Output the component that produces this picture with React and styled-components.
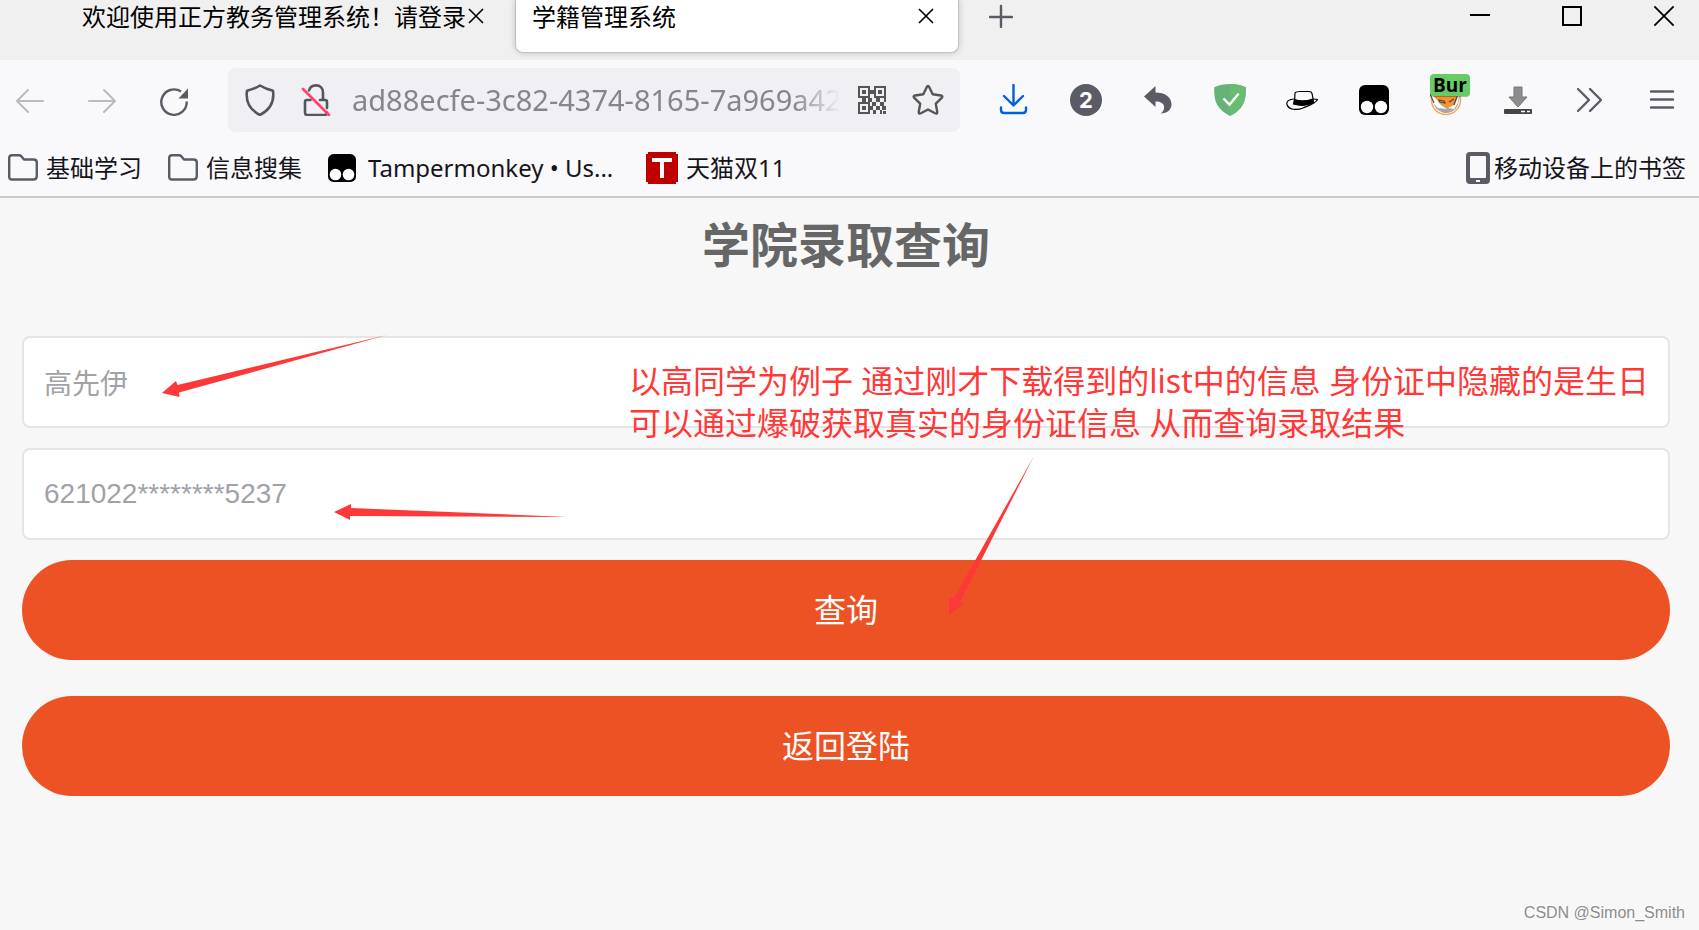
import React, { memo } from "react";
import styled, { createGlobalStyle } from "styled-components";

const GlobalStyle = createGlobalStyle`
  * {
    box-sizing: border-box;
  }
  body {
    margin: 0;
    background-color: #f7f7f7;
    font-family: "Noto Sans", "Noto Sans CJK SC", sans-serif;
  }
  button, input {
    margin: 0;
    padding: 0;
    border: 0;
    outline: 0;
    background: none;
    font-family: inherit;
  }
  svg {
    display: block;
    flex: none;
  }
`;

const Window = styled.div`
  display: flex;
  flex-direction: column;
  min-height: 100vh;
`;

const TabStrip = styled.header`
  display: flex;
  align-items: flex-start;
  height: 60px;
  background-color: #f0f0f0;
`;

const Tab = styled.div`
  display: flex;
  align-items: flex-start;
  width: 444px;
  height: 53px;
  padding: 0 24px 0 16px;
  justify-content: space-between;
  background-color: #ffffff;
  border: 1px solid #c0c0c8;
  border-top: 0;
  border-radius: 0 0 8px 8px;
  box-shadow: 0 0 6px rgba(0, 0, 0, 0.2);
`;

const BackgroundTab = styled.div`
  display: flex;
  align-items: flex-start;
  width: 515px;
  gap: 2px;
  padding-left: 82px;
`;

const TabTitle = styled.button`
  flex: none;
  height: 34px;
  font-size: 24px;
  line-height: 34px;
  color: #000000;
  white-space: nowrap;
`;

const TabClose = styled.button`
  display: flex;
  align-items: center;
  height: 32px;
`;

const NewTab = styled(TabClose)`
  margin-left: 30px;
`;

const WindowControls = styled.div`
  display: flex;
  gap: 70px;
  height: 32px;
  margin-left: auto;
  padding-right: 24px;
`;

const Toolbar = styled.nav`
  display: flex;
  align-items: center;
  gap: 26px;
  height: 80px;
  padding: 0 9px 0 2px;
  background-color: #f9f9fb;
`;

const ToolGroup = styled.div`
  display: flex;
  gap: 16px;
`;

const ToolButton = styled.button`
  display: flex;
  position: relative;
  align-items: center;
  justify-content: center;
  width: 56px;
  height: 56px;
`;

const UrlBar = styled.div`
  display: flex;
  flex: 1;
  min-width: 0;
  align-items: center;
  height: 64px;
  padding: 0 16px;
  background-color: #f0f0f4;
  border-radius: 8px;
`;

const UrlIcons = styled.div`
  display: flex;
  gap: 24px;
`;

const UrlButton = styled.button`
  width: 32px;
  height: 32px;
`;

const UrlInput = styled.input`
  flex: 1;
  min-width: 0;
  margin: 0 16px 0 20px;
  font-size: 29px;
  line-height: 44px;
  color: #85858a;
  mask-image: linear-gradient(to left, transparent, #000000 48px);
`;

const Badge = styled.span`
  position: absolute;
  top: 2px;
  left: 12px;
  width: 40px;
  height: 22px;
  border-radius: 4px;
  background-color: #66cc66;
  box-shadow: 0 1px 1px rgba(0, 0, 0, 0.3);
  font-family: "Open Sans", sans-serif;
  font-size: 19px;
  font-weight: 700;
  line-height: 22px;
  text-align: center;
  color: #000000;
`;

const Count = styled.span`
  width: 32px;
  height: 32px;
  border-radius: 50%;
  background-color: #5b5b66;
  font-family: Inter, sans-serif;
  font-size: 22px;
  font-weight: 700;
  line-height: 32px;
  text-align: center;
  color: #ffffff;
`;

const BookmarkBar = styled.div`
  display: flex;
  align-items: center;
  gap: 26px;
  height: 58px;
  padding: 0 13px 0 8px;
  background-color: #f9f9fb;
  border-bottom: 2px solid #cccccc;
`;

const Bookmark = styled.a`
  display: flex;
  align-items: center;
  gap: ${(props) => props.$gap || 8}px;
  min-width: ${(props) => props.$width || 134}px;
  font-size: 24px;
  line-height: 32px;
  color: #15141a;
  text-decoration: none;
  white-space: nowrap;
  &:last-child {
    margin-left: auto;
  }
`;

const Page = styled.main`
  position: relative;
  display: flex;
  flex: 1;
  flex-direction: column;
  padding: 0 29px 0 22px;
  background-color: #f7f7f7;
`;

const Title = styled.h1`
  margin: 0 0 44px;
  padding: 15px 0;
  font-size: 48px;
  font-weight: 700;
  line-height: 64px;
  text-align: center;
  color: #666666;
`;

const Form = styled.form`
  display: flex;
  flex-direction: column;
  gap: 20px;
`;

const Field = styled.input`
  width: 100%;
  height: 92px;
  padding: 0 20px;
  border: 2px solid #e5e5e5;
  border-radius: 8px;
  background-color: #ffffff;
  font-family: "Liberation Sans", "Noto Sans CJK SC", sans-serif;
  font-size: 28px;
  color: #a0a2a8;
`;

const Buttons = styled.div`
  display: flex;
  flex-direction: column;
  gap: 36px;
`;

const SubmitButton = styled.button`
  width: 100%;
  height: 100px;
  padding-bottom: 4px;
  border-radius: 50px;
  background-color: #ed5224;
  font-size: 32px;
  color: #ffffff;
`;

/* notes drawn over the form */
const Note = styled.p`
  position: absolute;
  top: 162px;
  left: 629px;
  margin: 0;
  font-size: 32px;
  line-height: 42px;
  color: #ff3838;
  white-space: nowrap;
`;

const Arrow = styled.svg`
  position: absolute;
  top: ${(props) => props.$top}px;
  left: ${(props) => props.$left}px;
  fill: #fc3838;
  pointer-events: none;
`;

const Watermark = styled.footer`
  margin: auto -15px 7px 0;
  font-family: "Liberation Sans", sans-serif;
  font-size: 16px;
  line-height: 20px;
  text-align: right;
  color: #8c8c8c;
  text-shadow: -1px -1px 0 #ffffff;
`;

const CrossIcon = ({ size = 16, width = 2 }) => (
  <svg width={size} height={size} viewBox="0 0 16 16" stroke="#000" strokeWidth={width} fill="none">
    <path d="M1 1l14 14M15 1L1 15" />
  </svg>
);

const ArrowIcon = ({ flip }) => (
  <svg width="32" height="32" fill="none" stroke="#bbbbbe" strokeWidth="2" strokeLinecap="round" strokeLinejoin="round">
    <path d={flip ? "M3 17h26M18 6l11 11-11 11" : "M29 17H3M14 6L3 17l11 11"} />
  </svg>
);

const ReloadIcon = () => (
  <svg width="32" height="32" fill="none" stroke="#5b5b66" strokeWidth="2.4">
    <path d="M28.7 17.5A12.7 12.7 0 1 1 23 7.5" />
    <path d="M30 4.5v10h-9.5z" fill="#5b5b66" stroke="none" />
  </svg>
);

const ShieldIcon = () => (
  <svg width="32" height="32" fill="none" stroke="#55555c" strokeWidth="2.6" strokeLinejoin="round">
    <path d="M16 1.5c4 2.5 8 4 13 5.3 1.500 10.500-3 19-13 24.200C6 26 1.500 17.300 3 6.800 8 5.500 12 4 16 1.500z" />
  </svg>
);

const LockIcon = () => (
  <svg width="32" height="32" fill="none" stroke="#55555c" strokeWidth="2.6" strokeLinecap="round">
    <path d="M9 6.500C10 3 12.500 1.400 16 1.400c4.300 0 7 3 7 7V15" />
    <path d="M10.500 16H7q-2 0-2 2v10.500q0 2.500 2.500 2.500h17q2.500 0 2.500-2.500M20 16h5q2 0 2 2v6" />
    <path d="M3 5l26 26" stroke="#ff4070" />
  </svg>
);

const QrIcon = () => (
  <svg width="32" height="32" fill="#555558">
    <path fillRule="evenodd" d="M2 2h12v12H2zm2 2v8h8V4zM18 2h12v12H18zm2 2v8h8V4zM2 18h12v12H2zm2 2v8h8v-8z" />
    <path d="M6 6h4v4H6zM22 6h4v4h-4zM6 22h4v4H6zM14 6h4v4h-4zM6 14h4v4H6zM12 14h4v4h-4zM16 18h4v4h-4zM20 14h4v4h-4zM24 18h4v4h-4zM28 14h2v4h-2zM20 22h4v4h-4zM14 22h3v4h-3zM17 26h3v4h-3zM24 26h2v4h-2zM26 22h4v4h-4zM27 27h3v3h-3z" />
  </svg>
);

const StarIcon = () => (
  <svg width="32" height="32" fill="none" stroke="#555558" strokeWidth="2.400" strokeLinejoin="round">
    <path d="M14.700 3.200q1.300-2.600 2.600 0l3.400 7.100 8.100 1.200q2.600.5.900 2.400l-5.900 5.700 1.400 8.200q.3 2.700-2.100 1.500L16 25.500l-7.100 3.800q-2.400 1.200-2.100-1.500l1.400-8.200-5.900-5.700q-1.700-1.900.9-2.400l8.100-1.200z" />
  </svg>
);

const DownloadIcon = () => (
  <svg width="32" height="32" fill="none" stroke="#0060df" strokeWidth="2.400" strokeLinecap="round" strokeLinejoin="round">
    <path d="M15.500 1v20M6 12l9.500 9.500L25 12M3 23.500V26q0 3 3 3h19q3 0 3-3v-2.500" />
  </svg>
);

const UndoIcon = () => (
  <svg width="32" height="32" fill="#5b5b66">
    <path d="M2 12.500L13.500 2v6.500C23 8.500 29.500 13 29.500 20.500c0 5-4.500 9-10.500 9 4.500-3.500 5.500-12-5.500-12v5.500z" />
  </svg>
);

const GuardIcon = () => (
  <svg width="32" height="32">
    <path d="M16 0c5.500 0 11 1 15.800 3.200C32 15 31 24 16 32 1 24 0 15 .2 3.200 5 1 10.500 0 16 0z" fill="#67b279" />
    <path d="M16 0c5.500 0 11 1 15.800 3.200C32 15 31 24 16 32z" fill="#68bc71" />
    <path d="M9.500 14.500l6 6.200 9-11" fill="none" stroke="#fff" strokeWidth="2.400" />
  </svg>
);

const HatIcon = () => (
  <svg width="32" height="32" fill="none" stroke="#000" strokeWidth="1.200">
    <path d="M8.500 18.500L9 9q1-1.500 5-1.500h9q2.500 0 3 2l1.500 7.500" />
    <path d="M8.300 15C2 15 .3 18 1 20.500 2.500 26 11 26.500 17 24c5-2.500 12-3.500 14.500-8.500l-4-.5" />
    <path d="M8.500 15.500q9 3 18-.5l1 3.500q-9 5-20 1.500z" fill="#000" />
  </svg>
);

const MonkeyIcon = ({ size }) => (
  <svg width={size} height={size} viewBox="0 0 30 30">
    <rect width="30" height="30" rx="6" />
    <circle cx="8" cy="22" r="6.200" fill="#fff" />
    <circle cx="22" cy="22" r="6.200" fill="#fff" />
  </svg>
);

const FoxIcon = () => (
  <svg width="32" height="32">
    <circle cx="16" cy="16" r="14.500" fill="#fff" stroke="#f5a85c" strokeWidth="1.500" />
    <path d="M3 17a13 13 0 0 0 25 4l2-9-13 6z" fill="#a9a9a9" />
    <path d="M0 9l4 4 10 10 9 2 5-16-6 3H5z" fill="#f59332" />
    <path d="M0 9l3 10 5 5 9 1-6-4zM29 9l-5 12-6 3 6 1 4-6z" fill="#fff" />
    <path d="M0 10l4 9M28 10l-4 11M9 16l5 1 1 2-5-1zM19 18l5-3" fill="none" stroke="#4d4540" strokeWidth="1.200" />
  </svg>
);

const DriveIcon = () => (
  <svg width="32" height="32">
    <path d="M12 3h8v10h5l-9 10-9-10h5z" fill="#8d8d8d" stroke="#777" strokeLinejoin="round" />
    <rect x="2" y="25" width="28" height="5" rx="1" fill="#444" />
    <path d="M19 27.500h4M25 27.500h3" stroke="#fff" strokeWidth="1.500" />
  </svg>
);

const MoreIcon = () => (
  <svg width="32" height="32" fill="none" stroke="#5b5b66" strokeWidth="2.400" strokeLinecap="round" strokeLinejoin="round">
    <path d="M4 5l11 11L4 27M16 5l11 11-11 11" />
  </svg>
);

const MenuIcon = () => (
  <svg width="32" height="32" stroke="#5b5b66" strokeWidth="2.400" strokeLinecap="round">
    <path d="M5 7.500h22M5 15.500h22M5 23.500h22" />
  </svg>
);

const FolderIcon = () => (
  <svg width="30" height="28" fill="none" stroke="#5b5b66" strokeWidth="2.400" strokeLinejoin="round">
    <path d="M1.200 23V4q0-2.800 2.800-2.800h7q1.500 0 2.300 1L16 5.500h9.500q3.300 0 3.300 3V22q0 3.500-3.300 3.500H4q-2.800 0-2.800-2.500z" />
  </svg>
);

const TmallIcon = () => (
  <svg width="32" height="32">
    <path d="M2 0h28v2h2v28h-2v2H2v-2H0V2h2z" fill="#be0000" />
    <path d="M6 6h20v4h-8v16h-4V10H6z" fill="#fff" />
  </svg>
);

const PhoneIcon = () => (
  <svg width="24" height="32">
    <path fillRule="evenodd" fill="#5b5b66" d="M4 0h16q4 0 4 4v24q0 4-4 4H4q-4 0-4-4V4q0-4 4-4zm1 4q-1 0-1 1v20q0 1 1 1h14q1 0 1-1V5q0-1-1-1zm5 24v2h4v-2z" />
  </svg>
);

const extensions = [
  { label: "下载", icon: <DownloadIcon /> },
  { label: "通知", icon: <Count>2</Count> },
  { label: "撤销", icon: <UndoIcon /> },
  { label: "AdGuard", icon: <GuardIcon /> },
  { label: "HackBar", icon: <HatIcon /> },
  { label: "Tampermonkey", icon: <MonkeyIcon size={30} /> },
  { label: "FoxyProxy", icon: <FoxIcon />, badge: "Bur" },
  { label: "下载管理", icon: <DriveIcon /> },
  { label: "更多工具", icon: <MoreIcon /> },
  { label: "菜单", icon: <MenuIcon /> },
];

const App = () => {

  return (
    <Window>
      <GlobalStyle />
      <TabStrip>
        <BackgroundTab>
          <TabTitle>欢迎使用正方教务管理系统！请登录</TabTitle>
          <TabClose aria-label="关闭标签页"><CrossIcon width={1.6} /></TabClose>
        </BackgroundTab>
        <Tab>
          <TabTitle>学籍管理系统</TabTitle>
          <TabClose aria-label="关闭标签页"><CrossIcon width={1.6} /></TabClose>
        </Tab>
        <NewTab aria-label="新建标签页">
          <svg width="24" height="24" stroke="#5b5b66" strokeWidth="2.400" strokeLinecap="round">
            <path d="M12 2v21M1 13h22" />
          </svg>
        </NewTab>
        <WindowControls>
          <TabClose aria-label="最小化">
            <svg width="22" height="22"><path d="M1 9h20v2H1z" /></svg>
          </TabClose>
          <TabClose aria-label="最大化">
            <svg width="22" height="22" fill="none" stroke="#000" strokeWidth="2"><path d="M2 2h18v18H2z" /></svg>
          </TabClose>
          <TabClose aria-label="关闭"><CrossIcon size={22} width={1.3} /></TabClose>
        </WindowControls>
      </TabStrip>
      <Toolbar>
        <ToolGroup>
          <ToolButton aria-label="后退"><ArrowIcon /></ToolButton>
          <ToolButton aria-label="前进"><ArrowIcon flip /></ToolButton>
          <ToolButton aria-label="刷新"><ReloadIcon /></ToolButton>
        </ToolGroup>
        <UrlBar>
          <UrlIcons>
            <UrlButton aria-label="跟踪保护"><ShieldIcon /></UrlButton>
            <UrlButton aria-label="连接不安全"><LockIcon /></UrlButton>
          </UrlIcons>
          <UrlInput aria-label="地址" defaultValue="ad88ecfe-3c82-4374-8165-7a969a429" />
          <UrlIcons>
            <UrlButton aria-label="二维码"><QrIcon /></UrlButton>
            <UrlButton aria-label="添加书签"><StarIcon /></UrlButton>
          </UrlIcons>
        </UrlBar>
        <ToolGroup>
          {extensions.map((item) => (
            <ToolButton key={item.label} aria-label={item.label}>
              {item.icon}
              {item.badge && <Badge>{item.badge}</Badge>}
            </ToolButton>
          ))}
        </ToolGroup>
      </Toolbar>
      <BookmarkBar>
        <Bookmark href="#"><FolderIcon />基础学习</Bookmark>
        <Bookmark href="#"><FolderIcon />信息搜集</Bookmark>
        <Bookmark href="#" $gap={12} $width={292}><MonkeyIcon size={28} />Tampermonkey • Us...</Bookmark>
        <Bookmark href="#"><TmallIcon />天猫双11</Bookmark>
        <Bookmark href="#" $gap={4}><PhoneIcon />移动设备上的书签</Bookmark>
      </BookmarkBar>
      <Page>
        <Title>学院录取查询</Title>
        <Form onSubmit={(e) => e.preventDefault()}>
          <Field aria-label="姓名" defaultValue="高先伊" />
          <Field aria-label="身份证号" defaultValue="621022********5237" />
          <Buttons>
            <SubmitButton type="submit">查询</SubmitButton>
            <SubmitButton type="button">返回登陆</SubmitButton>
          </Buttons>
        </Form>
        <Note>
          以高同学为例子 通过刚才下载得到的list中的信息 身份证中隐藏的是生日<br />
          可以通过爆破获取真实的身份证信息 从而查询录取结果
        </Note>
        <Arrow $left={160} $top={136} width="228" height="66">
          <path d="M2 59l14-12 1.500 4L227 1 19 58.500l.500 4.500z" />
        </Arrow>
        <Arrow $left={332} $top={304} width="240" height="20">
          <path d="M2 10L19 2v4l217 9L18 14v4z" />
        </Arrow>
        <Arrow $left={946} $top={257} width="90" height="162">
          <path d="M3 160V142l5 1L88 1 14 147l4 2z" />
        </Arrow>
        <Watermark>CSDN @Simon_Smith</Watermark>
      </Page>
    </Window>
  );
};

export default memo(App);
